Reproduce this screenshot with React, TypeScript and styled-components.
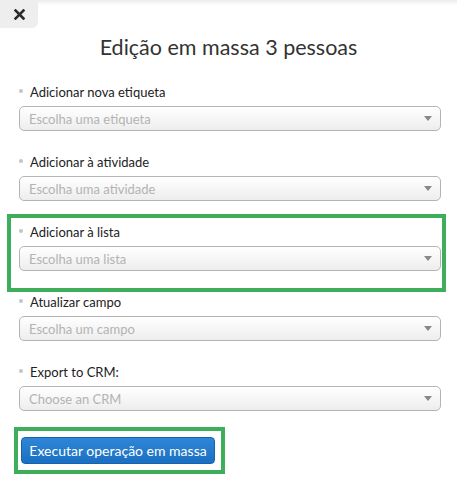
import styled, { createGlobalStyle } from "styled-components";

const GlobalStyle = createGlobalStyle`
  html, body {
    margin: 0;
    padding: 0;
    background: linear-gradient(#ececec 0, #fff 5px) no-repeat, #fff;
    font-family: Lato, "Liberation Sans", sans-serif;
  }
`;

const Page = styled.div`
  position: relative;
  width: 457px;
  height: 486px;
  overflow: hidden;
`;

const CloseButton = styled.button`
  position: absolute;
  top: 0;
  left: 0;
  width: 38px;
  height: 28px;
  border: none;
  padding: 0;
  background: #eeeeee;
  border-bottom-right-radius: 6px;
  display: flex;
  align-items: center;
  justify-content: center;
  cursor: pointer;
`;

const Title = styled.h1`
  margin: 30px 0 0;
  font-size: 21.5px;
  line-height: 34px;
  font-weight: 400;
  color: #333;
  text-align: center;
`;

const Form = styled.div`
  margin-top: 14px;
  padding: 0 15px 0 11px;
  display: flex;
  flex-direction: column;
`;

const Field = styled.div<{ $highlight?: boolean }>`
  height: 70px;
  box-sizing: border-box;
  padding: 6px 1px 0 8px;
  outline: ${(p) => (p.$highlight ? "4px solid #3fae5a" : "none")};
`;

const Label = styled.div`
  display: flex;
  align-items: center;
  height: 16px;
  font-size: 13px;
  color: #222;

  &::before {
    content: "";
    width: 4px;
    height: 4px;
    border-radius: 50%;
    background: #c4c4c4;
    margin: -2px 7px 0 0;
  }
`;

const Select = styled.div`
  margin-top: 6px;
  height: 25px;
  box-sizing: border-box;
  border: 1px solid #b4b4b4;
  border-radius: 5px;
  background: linear-gradient(#ffffff 0%, #f7f7f7 45%, #ededed 100%);
  display: flex;
  align-items: center;
  justify-content: space-between;
  padding: 0 9px;
  font-size: 13px;
  color: #b3b3b3;
`;

const Arrow = styled.span`
  width: 0;
  height: 0;
  border-left: 4px solid transparent;
  border-right: 4px solid transparent;
  border-top: 5px solid #888;
  margin-right: -1px;
`;

const ButtonWrap = styled.div`
  align-self: flex-start;
  margin: 3px 0 0 7px;
  padding: 6px 6px 6px 3px;
  outline: 4px solid #3fae5a;
`;

const SubmitButton = styled.button`
  height: 27px;
  width: 194px;
  box-sizing: border-box;
  border: 1px solid #1663ad;
  border-radius: 4px;
  background: linear-gradient(#2f86d6, #1a6fc2);
  color: #fff;
  font-family: Lato, "Liberation Sans", sans-serif;
  font-size: 14px;
  white-space: nowrap;
  padding: 0;
  cursor: pointer;
`;

const fields = [
  { label: "Adicionar nova etiqueta", placeholder: "Escolha uma etiqueta" },
  { label: "Adicionar à atividade", placeholder: "Escolha uma atividade" },
  { label: "Adicionar à lista", placeholder: "Escolha uma lista", highlight: true },
  { label: "Atualizar campo", placeholder: "Escolha um campo" },
  { label: "Export to CRM:", placeholder: "Choose an CRM" },
];

const App = () => {
  return (
    <>
      <GlobalStyle />
      <Page>
        <CloseButton aria-label="Fechar">
          <svg width="11" height="11" viewBox="0 0 11 11">
            <path
              d="M1.5 1.5 L9.5 9.5 M9.5 1.5 L1.5 9.5"
              stroke="#2b2b2b"
              strokeWidth="2.6"
              strokeLinecap="square"
            />
          </svg>
        </CloseButton>
        <Title>Edição em massa 3 pessoas</Title>
        <Form>
          {fields.map((f) => (
            <Field key={f.label} $highlight={f.highlight}>
              <Label>{f.label}</Label>
              <Select>
                {f.placeholder}
                <Arrow />
              </Select>
            </Field>
          ))}
          <ButtonWrap>
            <SubmitButton>Executar operação em massa</SubmitButton>
          </ButtonWrap>
        </Form>
      </Page>
    </>
  );
};

export default App;
